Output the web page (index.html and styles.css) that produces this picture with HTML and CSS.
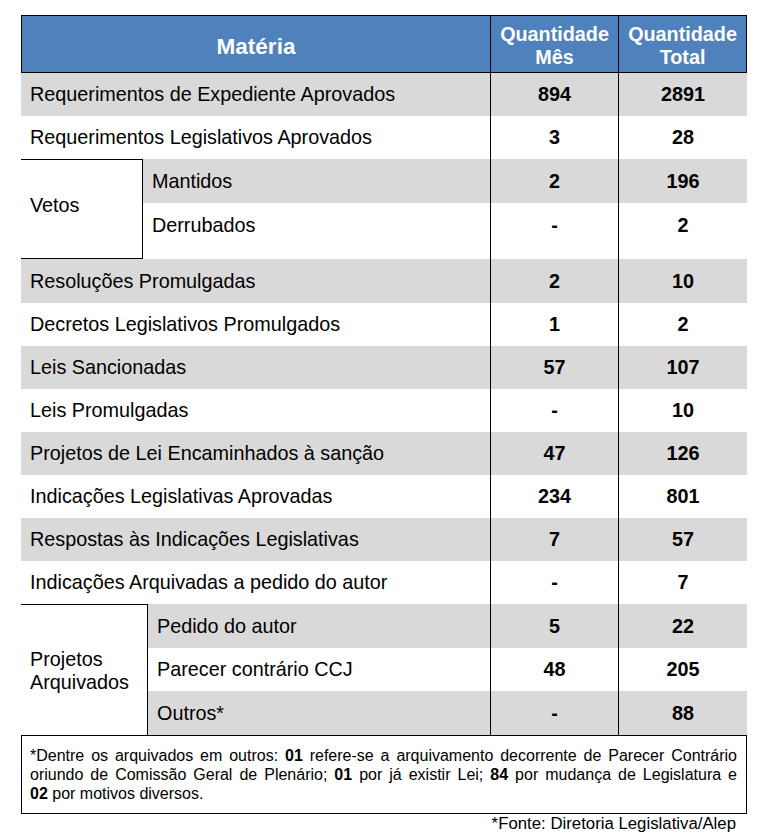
FILE: index.html
```html
<!DOCTYPE html>
<html lang="pt-BR">
<head>
<meta charset="utf-8">
<title>Matérias</title>
<link rel="stylesheet" href="styles.css">
</head>
<body>
<table class="tbl">
  <colgroup>
    <col class="c-a"><col class="c-b"><col class="c-c"><col class="c-d"><col class="c-e">
  </colgroup>
  <thead>
    <tr class="hrow">
      <th colspan="3" class="h-mat">Matéria</th>
      <th class="h-q vr">Quantidade<br>Mês</th>
      <th class="h-q h-last">Quantidade<br>Total</th>
    </tr>
  </thead>
  <tbody>
    <tr class="r43 g">
      <td colspan="3" class="lbl vr">Requerimentos de Expediente Aprovados</td>
      <td class="num vr">894</td><td class="num">2891</td>
    </tr>
    <tr class="r43">
      <td colspan="3" class="lbl vr">Requerimentos Legislativos Aprovados</td>
      <td class="num vr">3</td><td class="num">28</td>
    </tr>
    <tr class="r44 g">
      <td rowspan="2" class="grp grp-vetos">Vetos</td>
      <td colspan="2" class="sub vr">Mantidos</td>
      <td class="num vr">2</td><td class="num">196</td>
    </tr>
    <tr class="r56">
      <td colspan="2" class="sub vr pb12">Derrubados</td>
      <td class="num vr pb12">-</td><td class="num pb12">2</td>
    </tr>
    <tr class="r44 g">
      <td colspan="3" class="lbl vr">Resoluções Promulgadas</td>
      <td class="num vr">2</td><td class="num">10</td>
    </tr>
    <tr class="r43">
      <td colspan="3" class="lbl vr">Decretos Legislativos Promulgados</td>
      <td class="num vr">1</td><td class="num">2</td>
    </tr>
    <tr class="r43 g">
      <td colspan="3" class="lbl vr">Leis Sancionadas</td>
      <td class="num vr">57</td><td class="num">107</td>
    </tr>
    <tr class="r43">
      <td colspan="3" class="lbl vr">Leis Promulgadas</td>
      <td class="num vr">-</td><td class="num">10</td>
    </tr>
    <tr class="r43 g">
      <td colspan="3" class="lbl vr">Projetos de Lei Encaminhados à sanção</td>
      <td class="num vr">47</td><td class="num">126</td>
    </tr>
    <tr class="r43">
      <td colspan="3" class="lbl vr">Indicações Legislativas Aprovadas</td>
      <td class="num vr">234</td><td class="num">801</td>
    </tr>
    <tr class="r43 g">
      <td colspan="3" class="lbl vr">Respostas às Indicações Legislativas</td>
      <td class="num vr">7</td><td class="num">57</td>
    </tr>
    <tr class="r43">
      <td colspan="3" class="lbl vr">Indicações Arquivadas a pedido do autor</td>
      <td class="num vr">-</td><td class="num">7</td>
    </tr>
    <tr class="r44 g">
      <td rowspan="3" colspan="2" class="grp grp-proj">Projetos<br>Arquivados</td>
      <td class="sub vr">Pedido do autor</td>
      <td class="num vr">5</td><td class="num">22</td>
    </tr>
    <tr class="r43">
      <td class="sub vr">Parecer contrário CCJ</td>
      <td class="num vr">48</td><td class="num">205</td>
    </tr>
    <tr class="r44 g">
      <td class="sub vr">Outros*</td>
      <td class="num vr">-</td><td class="num">88</td>
    </tr>
  </tbody>
</table>
<div class="note">
  <span class="ln">*Dentre os arquivados em outros: <b>01</b> refere-se a arquivamento decorrente de Parecer Contrário</span>
  <span class="ln">oriundo de Comissão Geral de Plenário; <b>01</b> por já existir Lei; <b>84</b> por mudança de Legislatura e</span>
  <span class="ln ln-last"><b>02</b> por motivos diversos.</span>
</div>
<p class="src">*Fonte: Diretoria Legislativa/Alep</p>
</body>
</html>
```

FILE: styles.css
```css
html, body {
  margin: 0;
  padding: 0;
  background: #fff;
}
body {
  font-family: "Liberation Sans", Arial, sans-serif;
  color: #000;
}
.tbl {
  margin: 15px 0 0 21px;
  width: 726px;
  table-layout: fixed;
  border-collapse: separate;
  border-spacing: 0;
  font-size: 19.8px;
}
.c-a { width: 122px; }
.c-b { width: 5px; }
.c-c { width: 343px; }
.c-d { width: 128px; }
.c-e { width: 128px; }
.tbl th, .tbl td {
  padding: 0;
  vertical-align: middle;
}
.hrow { height: 58px; }
.tbl th {
  background: #4f81bd;
  color: #fff;
  font-weight: bold;
  border-top: 1px solid #000;
  border-bottom: 1px solid #000;
  text-align: center;
}
.h-mat {
  font-size: 22.5px;
  border-left: 1px solid #000;
  border-right: 1px solid #000;
  padding-top: 5px !important;
}
.h-q {
  font-size: 19.8px;
  line-height: 23px;
  padding-top: 3px !important;
}
.h-last { border-right: 1px solid #000; }
.vr { border-right: 1px solid #000; }
.r43 { height: 43px; }
.r44 { height: 44px; }
.r56 { height: 56px; }
.g td { background: #d9d9d9; }
.g td.grp { background: #fff; }
.lbl { padding-left: 9px !important; }
.sub { padding-left: 9px !important; }
.num {
  text-align: center;
  font-weight: bold;
}
.pb12 { padding-bottom: 12px !important; }
.grp { padding-left: 9px !important; }
.grp-vetos {
  border-top: 1px solid #000;
  border-right: 1px solid #000;
  border-bottom: 1px solid #000;
  padding-bottom: 8px !important;
}
.grp-proj {
  border-top: 1px solid #000;
  border-right: 1px solid #000;
  line-height: 23px;
  padding-top: 2px !important;
}
.note {
  box-sizing: border-box;
  margin-left: 21px;
  width: 726px;
  height: 79px;
  border: 1px solid #000;
  padding: 10px 9px 0 8px;
  font-size: 16px;
  line-height: 19px;
}
.ln {
  display: block;
  text-align: justify;
  text-align-last: justify;
  white-space: nowrap;
}
.ln-last { text-align-last: left; }
.src {
  margin: 0;
  width: 736px;
  text-align: right;
  font-size: 16.8px;
  line-height: 19px;
}
```
